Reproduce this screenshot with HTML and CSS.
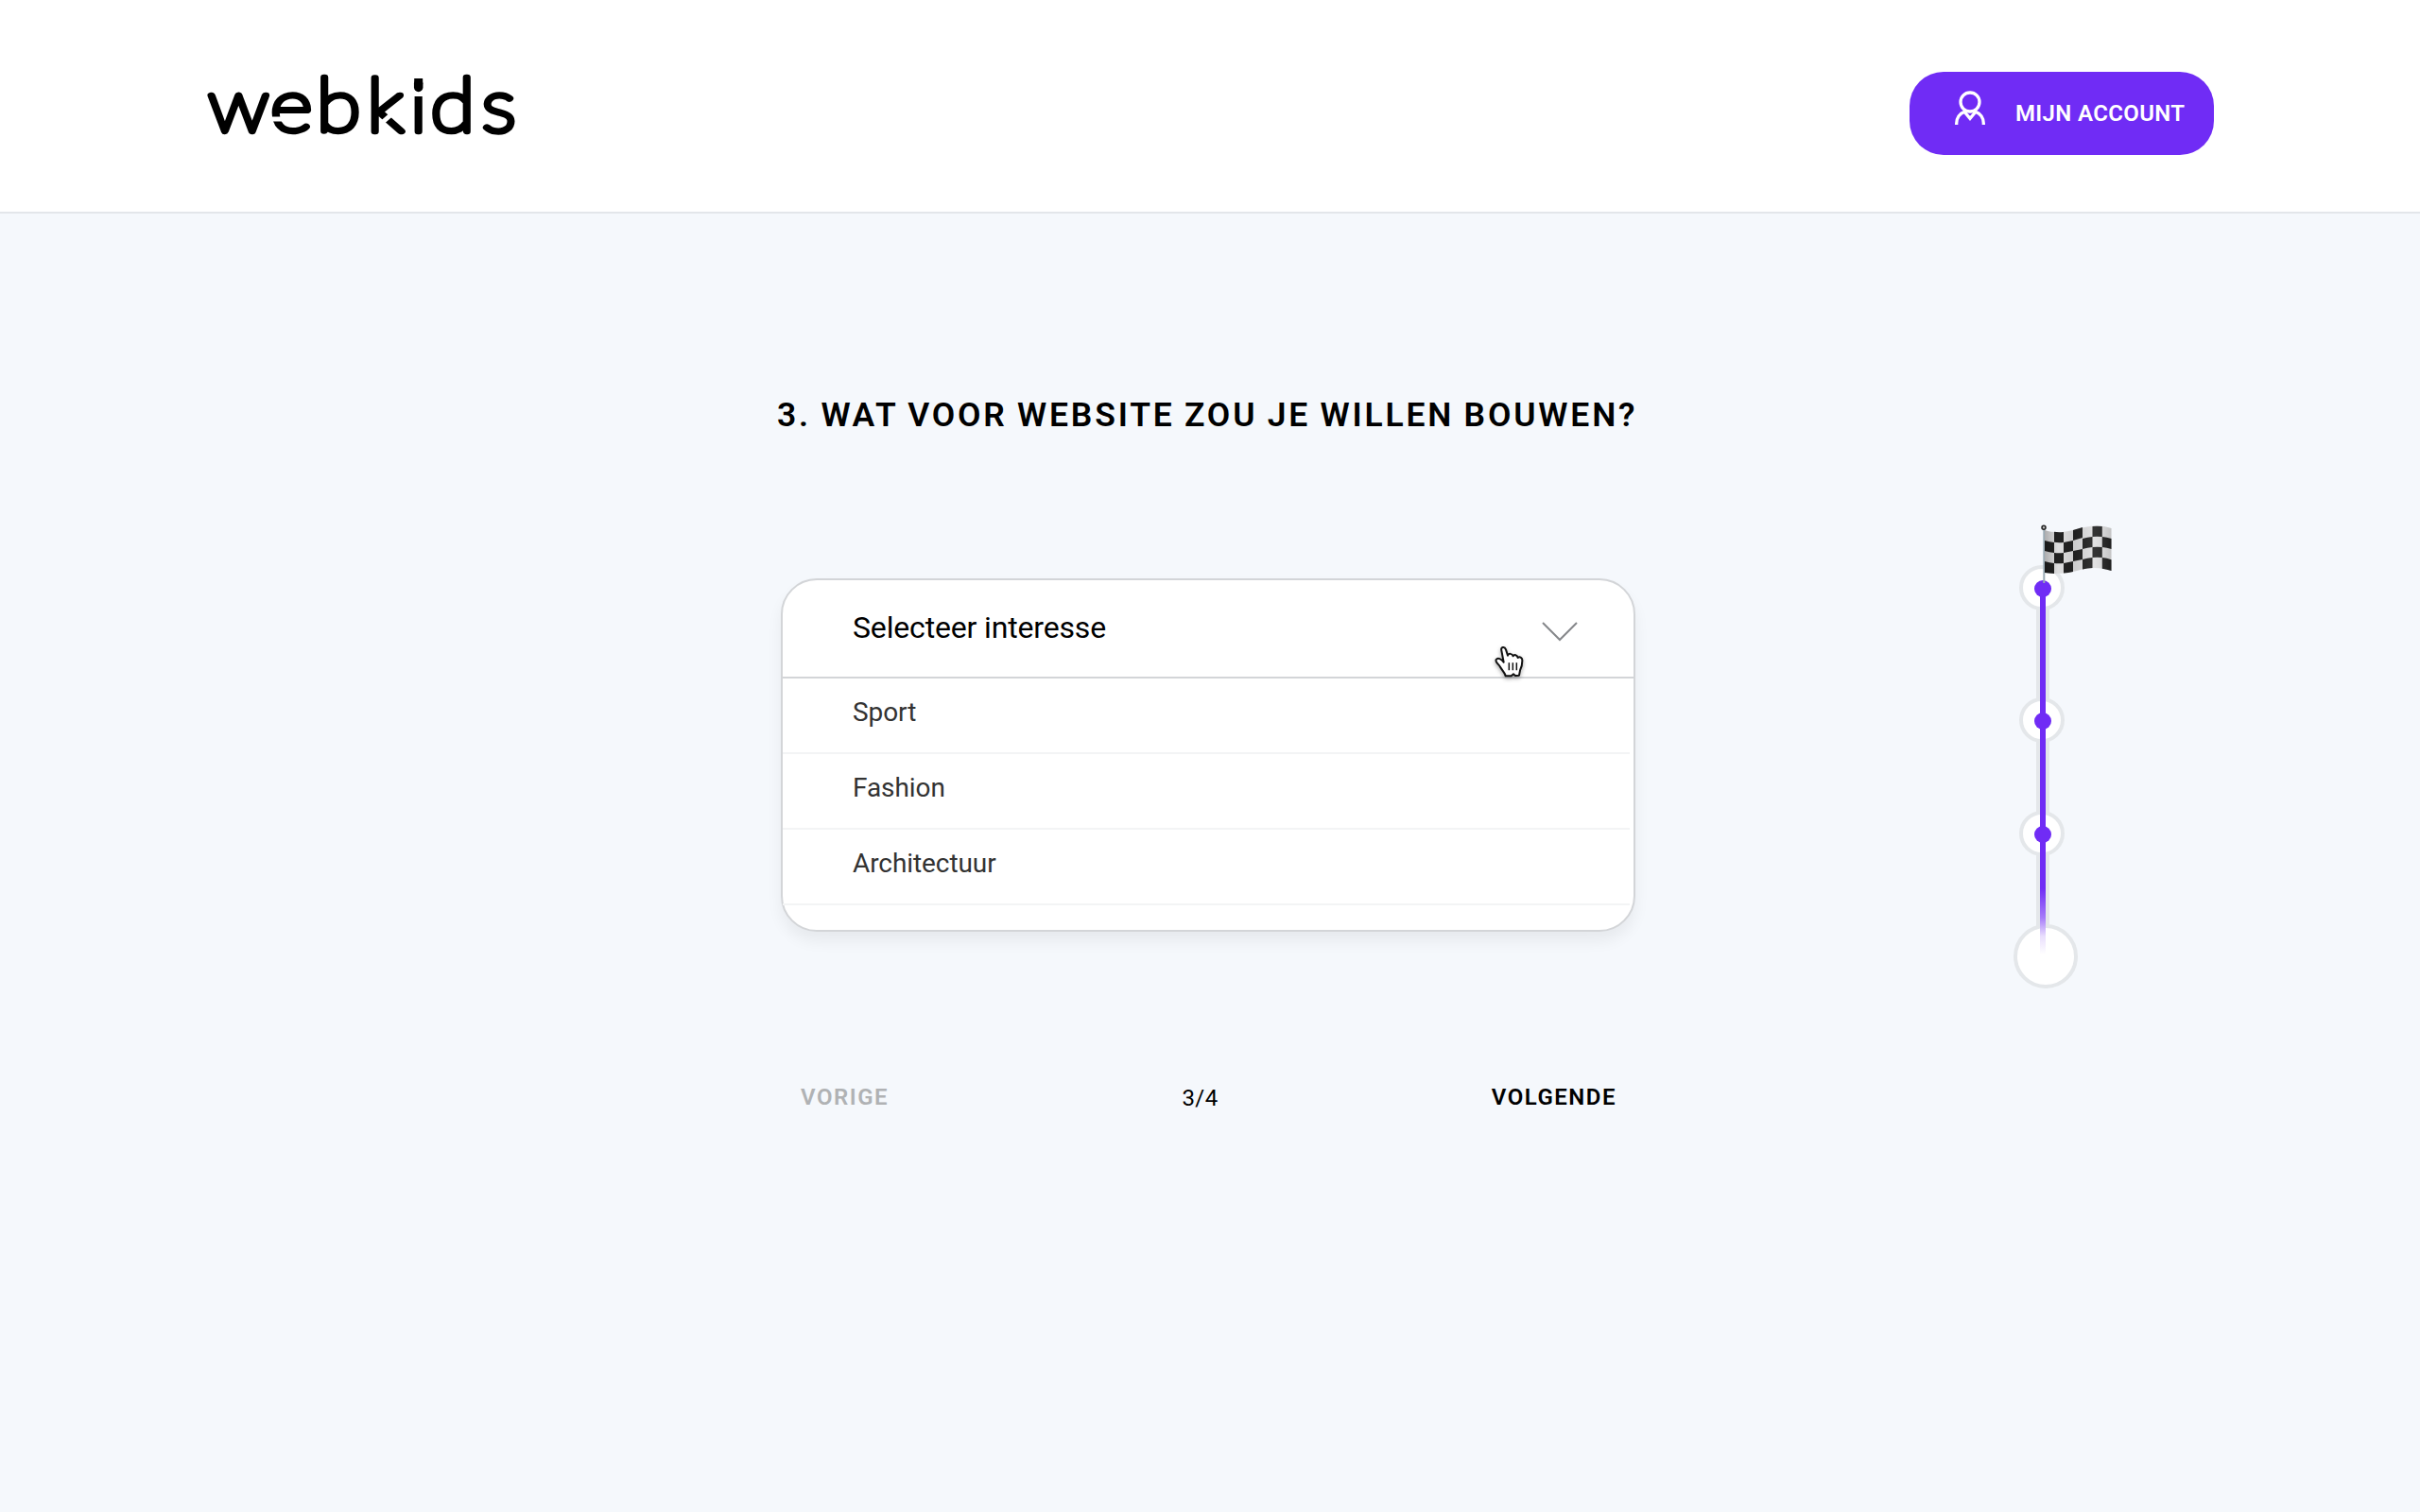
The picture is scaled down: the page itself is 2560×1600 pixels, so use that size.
FILE: index.html
```html
<!DOCTYPE html>
<html lang="nl">
<head>
<meta charset="utf-8">
<title>webkids</title>
<link rel="stylesheet" href="styles.css">
</head>
<body>
<header class="header">
  <svg class="logo" width="360" height="120" viewBox="212 46 360 120" role="img" aria-label="webkids">
    <text class="logo-text" transform="scale(1.1 1)" y="138.500" x="200.2 260 304.4 353 394.4 414 463.4">webkids</text>
    <path class="logo-cut" d="M286 125h12M404.500 128.500l13-11.500M436 98.500h12M435 79.500h15M435.700 78v20M449.700 78v20"/>
    <path class="logo-dot" d="M442.700 87.500v4"/>
  </svg>
  <a class="account" href="#">
    <svg class="account-icon" width="34" height="40" viewBox="0 0 34 40">
      <circle cx="17" cy="14" r="10"/>
      <path d="M2.700 38v-1.500C2.700 31 6 25.800 11 24.300L17 31.400 23 24.300C28 25.800 31.300 31 31.300 36.500V38"/>
    </svg>
    <span>MIJN ACCOUNT</span>
  </a>
</header>
<main class="main">
  <section class="question">
    <h1 class="title">3. WAT VOOR WEBSITE ZOU JE WILLEN BOUWEN?</h1>
    <div class="select">
      <div class="select-head">
        <span>Selecteer interesse</span>
        <svg class="chevron" width="40" height="22" viewBox="0 0 40 22"><path d="M2 2l18 18L38 2"/></svg>
        <svg class="cursor" width="50" height="50" viewBox="0 0 150 150">
          <path class="hand" d="M40 40C37 28 50 26 54 37L60 56C62 48 74 49 77 58 80 52 90 53 92 63 98 58 107 63 106 73 106 84 105 92 99 103L96 119 84 120 78 115 71 121 53 121C52 112 42 103 36 92 30 82 19 77 23 69 28 62 40 66 47 77z"/>
          <path class="fingers" d="M64 79v24M76 79v24M88 79v24"/>
        </svg>
      </div>
      <ul class="options">
        <li>Sport</li>
        <li>Fashion</li>
        <li>Architectuur</li>
      </ul>
    </div>
    <nav class="pager">
      <a class="prev" href="#">VORIGE</a>
      <span class="count">3/4</span>
      <a class="next" href="#">VOLGENDE</a>
    </nav>
  </section>
  <svg class="progress" width="120" height="500" viewBox="2125 550 120 500">
    <defs>
      <linearGradient id="fade" gradientUnits="userSpaceOnUse" x1="0" y1="622" x2="0" y2="1010">
        <stop offset="0" stop-color="#702cf5"/><stop offset=".82" stop-color="#702cf5"/>
        <stop offset=".9" stop-color="#a67cf9"/><stop offset=".95" stop-color="#e9defd"/><stop offset="1" stop-color="#fff"/>
      </linearGradient>
      <linearGradient id="shade" x1="0" x2="1" y1="0" y2="0">
        <stop offset="0" stop-color="#000" stop-opacity=".22"/><stop offset=".2" stop-color="#000" stop-opacity="0"/>
        <stop offset=".45" stop-color="#000" stop-opacity=".08"/><stop offset=".75" stop-color="#fff" stop-opacity=".08"/>
        <stop offset="1" stop-color="#000" stop-opacity=".12"/>
      </linearGradient>
    </defs>
    <rect class="track" x="2154" y="622" width="14" height="390"/>
    <g class="ring">
      <circle cx="2160" cy="622" r="22"/>
      <circle cx="2160" cy="762" r="22"/>
      <circle cx="2160" cy="882" r="22"/>
      <circle cx="2164" cy="1012" r="32"/>
    </g>
    <rect x="2158" y="622" width="6" height="390" fill="url(#fade)"/>
    <g class="dot">
      <circle cx="2161" cy="623" r="9"/>
      <circle cx="2161" cy="763" r="9"/>
      <circle cx="2161" cy="883" r="9"/>
    </g>
    <path class="pole" d="M2162.300 560v57"/>
    <circle class="knob" cx="2162" cy="558.300" r="2"/>
    <path class="cloth" d="M2163 561C2174 565 2186 563 2197 560 2210 556 2222 555 2233.500 559V604C2222 600 2210 600 2197 604 2186 607 2174 608 2163 606z"/>
    <g class="checks">
      <path d="M2173 562.800q5 .7 10 .1v11q-5 .6-10-.1zM2193 561l10-3v11l-10 3zM2213.500 557q5-.7 10.300.1v11q-5.300-.8-10.300-.1z"/>
      <path d="M2163 572q5 1.600 10 1.900v11q-5-.3-10-1.900zM2183 573.900q5-.6 10-1.900v11q-5 1.300-10 1.900zM2203 570q5-1.600 10.500-2v11q-5.500.4-10.500 2zM2223.800 568q5 .6 9.700 2v11q-4.700-1.400-9.700-2z"/>
      <path d="M2173 584.900q5 .6 10 0v11q-5 .6-10 0zM2193 583q5-1 10-2v11q-5 1-10 2zM2213.500 579q5-.6 10.300 0v11q-5.300-.6-10.300 0z"/>
      <path d="M2163 594q5 1.400 10 1.900v11q-5-.1-10-.9zM2183 595.900q5-.6 10-1.900v11q-5 1.300-10 1.600zM2203 592q5-1.500 10.500-2v11q-5.500.3-10.500 1.500zM2223.800 590q5 .6 9.700 2.300v11.700q-4.700-1.600-9.700-2.300z"/>
    </g>
    <path fill="url(#shade)" d="M2163 561C2174 565 2186 563 2197 560 2210 556 2222 555 2233.500 559V604C2222 600 2210 600 2197 604 2186 607 2174 608 2163 606z"/>
  </svg>
</main>
</body>
</html>
```
FILE: styles.css
```css
* { box-sizing: border-box; }
body {
  margin: 0;
  min-height: 1600px;
  background: #f5f8fc;
  font-family: Roboto, sans-serif;
  color: #000;
}
a { color: inherit; text-decoration: none; }
.header {
  display: flex;
  justify-content: space-between;
  align-items: flex-start;
  height: 226px;
  padding: 46px 218px 0 212px;
  background: #fff;
  border-bottom: 2px solid #e3e6ea;
}
.logo { margin-top: 1px; overflow: visible; }
.logo-text {
  font: 100 78px Lato, sans-serif;
  stroke: #000;
  stroke-width: 6.5px;
  stroke-linejoin: round;
}
.logo-cut { fill: none; stroke: #fff; stroke-width: 5px; }
.logo-dot { stroke: #000; stroke-width: 9.5px; stroke-linecap: round; }
.account {
  display: flex;
  align-items: center;
  width: 322px;
  height: 88px;
  margin-top: 30px;
  padding-left: 47px;
  border-radius: 36px;
  background: #702cf5;
  color: #fff;
  font-size: 24px;
  font-weight: 600;
  letter-spacing: .35px;
  white-space: nowrap;
}
.account-icon {
  margin: -12px 31px 0 0;
  fill: none;
  stroke: #fff;
  stroke-width: 3.3px;
}
.main {
  display: flex;
  align-items: flex-start;
  padding: 193px 0 0 822px;
}
.question { width: 912px; }
.title {
  margin: 0;
  font-size: 35.5px;
  font-weight: 600;
  line-height: 40px;
  letter-spacing: 2.8px;
  word-spacing: -1.2px;
  white-space: nowrap;
}
.select {
  width: 904px;
  height: 374px;
  margin: 153px 0 0 4px;
  border: 2px solid #d3d5d8;
  border-radius: 38px;
  background: #fff;
  box-shadow: 0 10px 16px rgba(0, 0, 0, .06);
}
.select-head {
  position: relative;
  display: flex;
  align-items: center;
  justify-content: space-between;
  height: 104px;
  padding: 0 58px 3px 74px;
  border-bottom: 2px solid #d3d5d8;
  font-size: 32px;
  letter-spacing: -.16px;
}
.chevron { margin-top: 9px; fill: none; stroke: #85878a; stroke-width: 2px; }
.cursor { position: absolute; left: 747px; top: 61px; filter: drop-shadow(0 2px 2px rgba(0, 0, 0, .35)); }
.hand { fill: #fff; stroke: #111; stroke-width: 6px; stroke-linejoin: round; }
.fingers { stroke: #111; stroke-width: 4.5px; }
.options { margin: 0; padding: 0 4px 0 0; list-style: none; font-size: 28px; letter-spacing: -.08px; color: #333; }
.options li {
  display: flex;
  align-items: center;
  height: 80px;
  padding: 0 0 7px 74px;
  border-bottom: 2px solid #f3f4f5;
}
.pager {
  display: grid;
  grid-template-columns: 1fr auto 1fr;
  margin: 160px 24px 0 25px;
  font-size: 24px;
  line-height: 30px;
}
.prev, .next { font-weight: 600; letter-spacing: 1.5px; }
.prev { color: #b0b2b4; }
.count { padding-top: 1px; margin-right: 18px; letter-spacing: .4px; }
.next { justify-self: end; }
.progress { margin: 131px 0 0 391px; }
.track { fill: #e4e7ea; }
.ring { fill: #fff; stroke: #e4e7ea; stroke-width: 4px; }
.dot { fill: #702cf5; }
.pole { stroke: #9aabb5; stroke-width: 2px; }
.knob { fill: #bbb; stroke: #222; stroke-width: 1.5px; }
.cloth { fill: #dededf; }
.checks { fill: #222; }
```
